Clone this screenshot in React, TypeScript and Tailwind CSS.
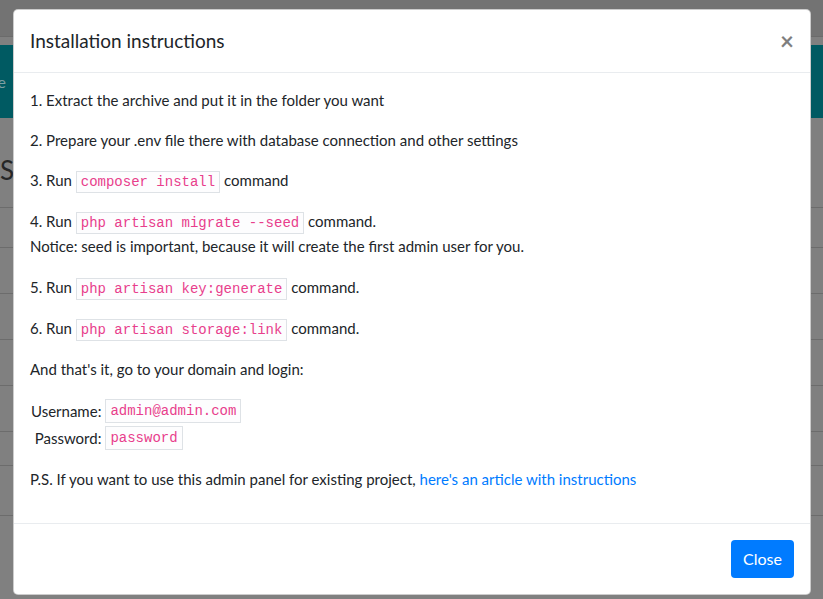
import React from "react";

const rows = [40, 46, 46, 46, 46, 34, 50, 42];

function Code({ children }: { children: React.ReactNode }) {
  return (
    <code className="font-['Liberation_Mono',monospace] text-[14px] leading-[18px] text-[#e83e8c] border border-[#dee2e6] bg-[#fdfdfe] px-[4px] py-[2px]">
      {children}
    </code>
  );
}

export default function App() {
  return (
    <div className="relative w-[823px] h-[599px] overflow-hidden bg-[#808080] font-['Lato',sans-serif]">
      {/* dimmed page behind the modal */}
      <div className="flex flex-col">
        <div className="h-[37px] bg-[#737373] border-b border-[#6b6b6b]" />
        <div className="h-[8px]" />
        <div className="h-[73px] bg-[#005a62] flex items-center">
          <span className="ml-[-22px] text-[16px] text-[#7e9fa3]">free</span>
        </div>
        <div className="h-[89px] flex items-center pt-[14px]">
          <span className="text-[26px] leading-none text-[#262626]">Settings</span>
        </div>
        {rows.map((h, i) => (
          <div key={i} style={{ height: h }} className="border-t border-[#6c6c6c]" />
        ))}
      </div>

      {/* modal */}
      <div className="absolute left-[13px] top-[9px] w-[798px] bg-white rounded-[5px] border border-black/20 text-[#212529]">
        <div className="flex items-start justify-between p-4 border-b border-[#e9ecef]">
          <h5 className="text-[19px] leading-[30px] font-normal">Installation instructions</h5>
          <button className="p-4 -m-4 ml-auto text-[24px] font-bold leading-[30px] text-black opacity-50">
            ×
          </button>
        </div>

        <div className="px-4 pt-[15px] pb-4 text-[15px] leading-6">
          <p className="mb-4">1. Extract the archive and put it in the folder you want</p>
          <p className="mb-4">2. Prepare your .env file there with database connection and other settings</p>
          <p className="mb-4 leading-[25px]">
            3. Run <Code>composer install</Code> command
          </p>
          <p className="mb-4 leading-[25px]">
            4. Run <Code>php artisan migrate --seed</Code> command.
            <br />
            Notice: seed is important, because it will create the first admin user for you.
          </p>
          <p className="mb-4 leading-[25px]">
            5. Run <Code>php artisan key:generate</Code> command.
          </p>
          <p className="mb-4 leading-[25px]">
            6. Run <Code>php artisan storage:link</Code> command.
          </p>
          <p className="mb-4">And that's it, go to your domain and login:</p>
          <div className="mb-4 grid grid-cols-[auto_1fr] gap-x-[4px] w-max">
            <div className="h-[27px] flex items-center justify-end pl-[1px]">Username:</div>
            <div className="h-[27px] flex items-center">
              <Code>admin@admin.com</Code>
            </div>
            <div className="h-[27px] flex items-center justify-end">Password:</div>
            <div className="h-[27px] flex items-center">
              <Code>password</Code>
            </div>
          </div>
          <p className="mb-4">
            P.S. If you want to use this admin panel for existing project,{" "}
            <a className="text-[#007bff]" href="#">
              here's an article with instructions
            </a>
          </p>
        </div>

        <div className="flex justify-end p-4 border-t border-[#e9ecef]">
          <button className="bg-[#007bff] text-white text-[16px] leading-6 px-3 py-[7px] rounded-[4px]">
            Close
          </button>
        </div>
      </div>
    </div>
  );
}
